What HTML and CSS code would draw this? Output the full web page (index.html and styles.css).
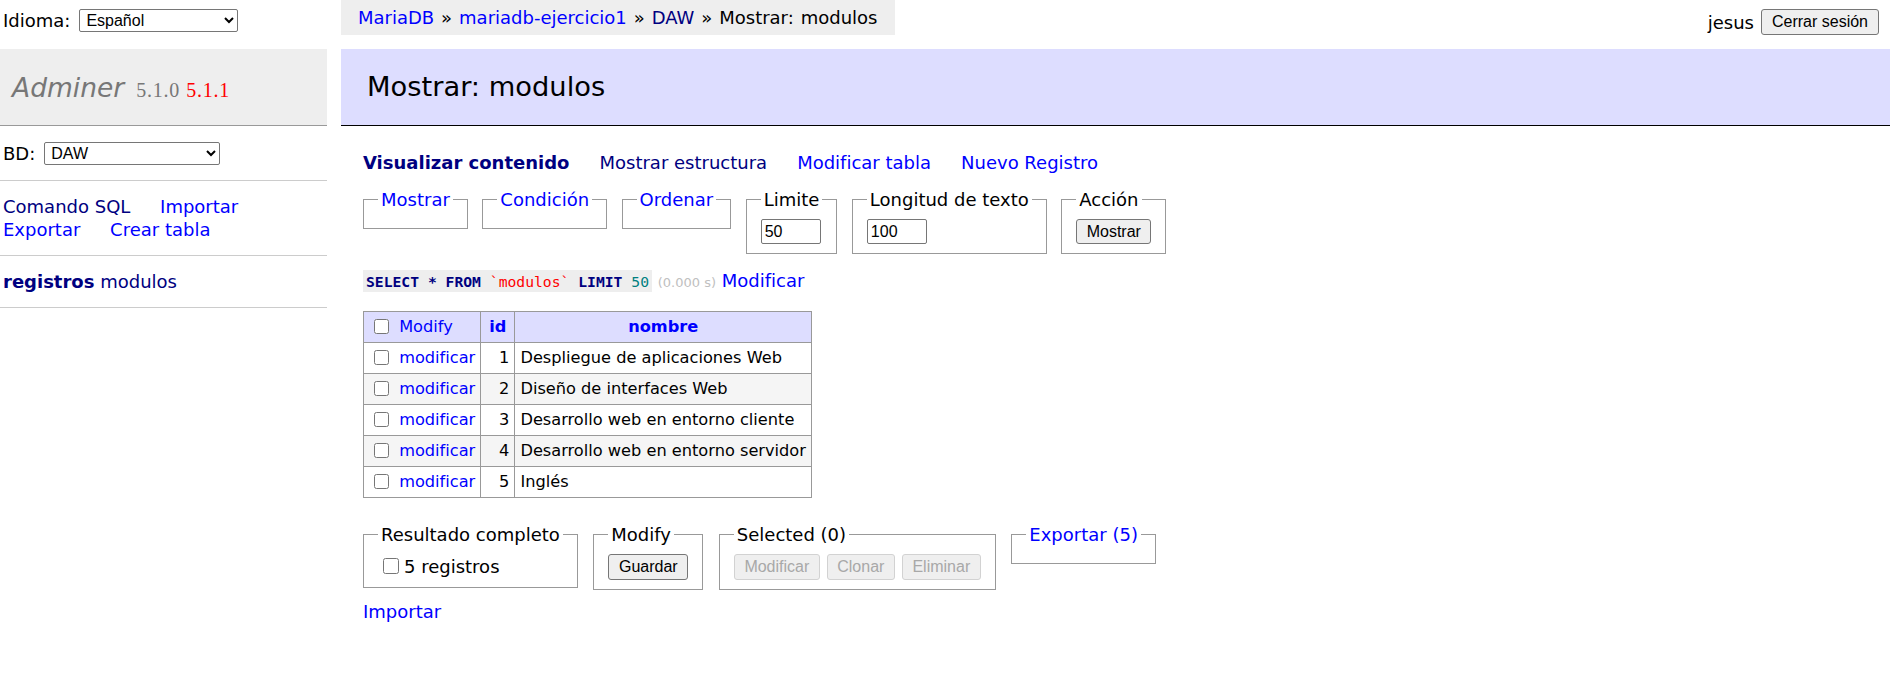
FILE: index.html
```html
<!DOCTYPE html>
<html lang="es">
<head>
<meta charset="utf-8">
<title>Mostrar: modulos - Adminer</title>
<link rel="stylesheet" href="styles.css">
</head>
<body>
<div class="page">
  <header class="topbar">
    <form class="lang">
      <span>Idioma:</span>
      <select class="lang-select"><option>Español</option></select>
    </form>
    <p class="breadcrumb"><a href="#">MariaDB</a> » <a href="#">mariadb-ejercicio1</a> » <a href="#" class="visited">DAW</a> » Mostrar: modulos</p>
    <div class="user">
      <span>jesus</span>
      <button type="button" class="btn btn-logout">Cerrar sesión</button>
    </div>
  </header>

  <div class="main">
    <aside class="menu">
      <h1 class="brand"><a href="#" class="brand-name">Adminer</a><span class="version">5.1.0</span><a href="#" class="new-version">5.1.1</a></h1>
      <div class="menu-block dbs">
        <span>BD:</span>
        <select class="db-select"><option>DAW</option></select>
      </div>
      <p class="menu-block menu-links">
        <a href="#" class="visited">Comando SQL</a> <a href="#">Importar</a> <a href="#">Exportar</a> <a href="#">Crear tabla</a>
      </p>
      <p class="menu-block tables"><a href="#" class="visited strong">registros</a> <a href="#" class="visited">modulos</a></p>
    </aside>

    <main class="content">
      <h2 class="title">Mostrar: modulos</h2>
      <div class="body">
        <p class="tabs">
          <a href="#" class="visited strong">Visualizar contenido</a>
          <a href="#" class="visited">Mostrar estructura</a>
          <a href="#">Modificar tabla</a>
          <a href="#">Nuevo Registro</a>
        </p>

        <form class="fieldsets top-sets">
          <fieldset class="empty"><legend><a href="#">Mostrar</a></legend></fieldset>
          <fieldset class="empty"><legend><a href="#">Condición</a></legend></fieldset>
          <fieldset class="empty"><legend><a href="#">Ordenar</a></legend></fieldset>
          <fieldset><legend>Limite</legend><input class="num-input" type="text" value="50"></fieldset>
          <fieldset><legend>Longitud de texto</legend><input class="num-input" type="text" value="100"></fieldset>
          <fieldset><legend>Acción</legend><button type="button" class="btn btn-show">Mostrar</button></fieldset>
        </form>

        <p class="sql-line"><code class="sql"><b class="kw">SELECT</b> <b class="kw">*</b> <b class="kw">FROM</b> <span class="bac">`modulos`</span> <b class="kw">LIMIT</b> <span class="num">50</span></code> <span class="time">(0.000 s)</span> <a href="#">Modificar</a></p>

        <table class="data">
          <thead>
            <tr>
              <td class="sel"><input type="checkbox" class="cb"> <a href="#">Modify</a></td>
              <th><a href="#">id</a></th>
              <th><a href="#">nombre</a></th>
            </tr>
          </thead>
          <tbody>
            <tr>
              <td class="sel"><input type="checkbox" class="cb"> <a href="#">modificar</a></td>
              <td class="number">1</td>
              <td>Despliegue de aplicaciones Web</td>
            </tr>
            <tr>
              <td class="sel"><input type="checkbox" class="cb"> <a href="#">modificar</a></td>
              <td class="number">2</td>
              <td>Diseño de interfaces Web</td>
            </tr>
            <tr>
              <td class="sel"><input type="checkbox" class="cb"> <a href="#">modificar</a></td>
              <td class="number">3</td>
              <td>Desarrollo web en entorno cliente</td>
            </tr>
            <tr>
              <td class="sel"><input type="checkbox" class="cb"> <a href="#">modificar</a></td>
              <td class="number">4</td>
              <td>Desarrollo web en entorno servidor</td>
            </tr>
            <tr>
              <td class="sel"><input type="checkbox" class="cb"> <a href="#">modificar</a></td>
              <td class="number">5</td>
              <td>Inglés</td>
            </tr>
          </tbody>
        </table>

        <form class="fieldsets footer-sets">
          <fieldset><legend>Resultado completo</legend><label class="all"><input type="checkbox" class="cb cb-all">5 registros</label></fieldset>
          <fieldset><legend>Modify</legend><button type="button" class="btn btn-save">Guardar</button></fieldset>
          <fieldset><legend>Selected (0)</legend><div class="btn-row"><button type="button" class="btn" disabled>Modificar</button><button type="button" class="btn" disabled>Clonar</button><button type="button" class="btn" disabled>Eliminar</button></div></fieldset>
          <fieldset class="empty"><legend><a href="#">Exportar (5)</a></legend></fieldset>
        </form>

        <p class="import"><a href="#">Importar</a></p>
      </div>
    </main>
  </div>
</div>
</body>
</html>
```

FILE: styles.css
```css
* { box-sizing: border-box; }

body {
  margin: 0;
  font: 18px/23px "DejaVu Sans", Verdana, sans-serif;
  color: #000;
  background: #fff;
}

a { color: #00f; text-decoration: none; }
a.visited { color: #000080; }
.strong { font-weight: bold; }

p { margin: 0; }

select {
  font: 16px "Liberation Sans", Arial, sans-serif;
  height: 23px;
  border: 1px solid #767676;
  border-radius: 2px;
  background: #fff;
  color: #000;
  padding: 0 2px;
}

.btn {
  font: 16px "Liberation Sans", Arial, sans-serif;
  height: 26px;
  padding: 0 8px;
  background: #efefef;
  color: #000;
  border: 1px solid #767676;
  border-radius: 3px;
}
.btn:disabled {
  color: #a8a8a8;
  border-color: #d2d2d2;
  background: #efefef;
}

/* ---------- top bar ---------- */
.topbar {
  display: flex;
  align-items: flex-start;
  height: 49px;
  padding-right: 11px;
}
.lang {
  width: 341px;
  flex: none;
  height: 41px;
  display: flex;
  align-items: center;
  gap: 9px;
  padding-left: 3px;
  margin: 0;
}
.lang-select { width: 159px; }

.breadcrumb {
  background: #eee;
  height: 35px;
  line-height: 35px;
  padding: 0 18px 0 17px;
  white-space: nowrap;
  word-spacing: 1.2px;
}

.user {
  margin-left: auto;
  margin-top: 9px;
  display: flex;
  align-items: center;
  gap: 7px;
}
.btn-logout { width: 118px; }

/* ---------- layout ---------- */
.main { display: flex; align-items: flex-start; }

.menu { width: 327px; flex: none; }

.brand {
  margin: 0;
  height: 77px;
  padding: 23px 12px 0;
  background: #eee;
  border-bottom: 1px solid #999;
  font-weight: normal;
  font-size: 26.5px;
  line-height: 32px;
  white-space: nowrap;
}
.brand-name { color: #777; font-style: italic; }
.version, .new-version {
  font-family: "Liberation Serif", "Times New Roman", serif;
  font-size: 20px;
  letter-spacing: 0.8px;
}
.version { color: #777; margin-left: 12px; }
.new-version { color: red; margin-left: 6px; }

.menu-block {
  padding: 14px 3px;
  border-bottom: 1px solid #ccc;
}
.dbs {
  display: flex;
  align-items: center;
  gap: 9px;
  height: 55px;
}
.db-select { width: 176px; }

.menu-links a { margin-right: 24px; white-space: nowrap; }

/* ---------- content ---------- */
.content { flex: 1; min-width: 0; margin-left: 14px; }

.title {
  margin: 0;
  height: 77px;
  padding: 21px 26px 0;
  background: #ddf;
  border-bottom: 1px solid #000;
  font-weight: normal;
  font-size: 27.3px;
  line-height: 33px;
}

.body { padding-left: 22px; }

.tabs {
  margin-top: 25px;
  display: flex;
  gap: 30px;
  white-space: nowrap;
}

.fieldsets {
  display: flex;
  align-items: flex-start;
  gap: 15.5px;
  margin: 14px 0 0;
}
.top-sets { gap: 14.5px; }
fieldset {
  margin: 0;
  min-width: 0;
  border: 1px solid #999;
  padding: 8px 14px 9px;
}
legend { padding: 0 3px; line-height: 23px; }

.num-input {
  display: block;
  width: 60px;
  height: 25px;
  font: 16px "Liberation Sans", Arial, sans-serif;
  border: 1px solid #767676;
  border-radius: 2px;
  padding: 0 3px;
}
.btn-show { display: block; height: 25px; width: 75px; padding: 0; }

.sql-line { margin-top: 15px; white-space: nowrap; }
.sql {
  font: 14.7px "DejaVu Sans Mono", "Liberation Mono", monospace;
  background: #eee;
  padding: 3px 3px 2px;
}
.kw { color: #000080; font-weight: bold; }
.bac { color: red; }
.num { color: #007f7f; }
.time { color: silver; font-size: 13px; }

/* ---------- table ---------- */
.data {
  border-collapse: collapse;
  margin-top: 17px;
  font-size: 16.2px;
  line-height: 20px;
}
.data th, .data td {
  border: 1px solid #999;
  padding: 0 5px;
  height: 31px;
  vertical-align: middle;
  white-space: nowrap;
}
.data thead td, .data thead th { background: #ddf; }
.data thead th { text-align: center; padding: 0 8px; }
.data tbody tr:nth-child(2n) td { background: #f5f5f5; }
.number { text-align: right; }

.cb {
  width: 15px;
  height: 15px;
  margin: 0 5px 0 5px;
  vertical-align: middle;
  position: relative;
  top: -1px;
}

/* ---------- footer ---------- */
.footer-sets { margin-top: 25px; }
.all { display: flex; align-items: center; gap: 5px; height: 24px; }
.cb-all { width: 16px; height: 16px; top: 0; margin: 0 0 0 5px; }
.btn-save { width: 80px; padding: 0; }
.btn-row { display: flex; gap: 7px; }
.btn-row .btn:nth-child(1) { width: 86px; padding: 0; }
.btn-row .btn:nth-child(2) { width: 68px; padding: 0; }
.btn-row .btn:nth-child(3) { width: 79px; padding: 0; }

.import { margin-top: 10px; }
```
